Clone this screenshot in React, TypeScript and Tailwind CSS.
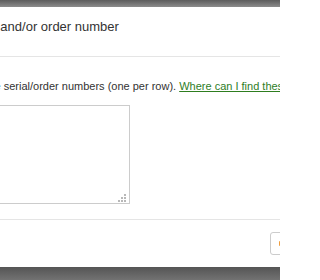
import React from "react";

export default function App() {
  return (
    <div className="w-[280px] h-[280px] overflow-hidden flex flex-col bg-[#666] font-['Liberation_Sans',Arial,sans-serif] text-[#333]">
      <div className="h-[7px] shrink-0 bg-gradient-to-b from-[#5c5c5c] to-[#8c8c8c]" />
      <div className="ml-[-84px] w-[449px] h-[260px] shrink-0 bg-white flex flex-col">
        <div className="px-[15px] pt-[11px] pb-[20px] border-b border-[#e5e5e5]">
          <h4 className="text-[13px] leading-[18px] whitespace-nowrap font-normal">
            Enter serial and/or order number
          </h4>
        </div>
        <div className="pl-[40px] pt-[22px] pb-[15px]">
          <p className="text-[11px] leading-[15px] whitespace-nowrap">
            Enter the serial/order numbers (one per row).{" "}
            <a href="#" className="text-[#2e7d1f] underline decoration-[#2e7d1f]">
              Where can I find these numbers?
            </a>
          </p>
          <div className="relative mt-[11px] w-[174px] h-[99px]">
            <textarea className="block w-full h-full border border-[#cccccc] resize-none outline-none bg-white" />
            <svg
              className="absolute right-[4px] bottom-[2px]"
              width="8"
              height="8"
              viewBox="0 0 8 8"
            >
              <rect x="6" y="0" width="2" height="2" fill="#b8b8b8" />
              <rect x="3" y="3" width="2" height="2" fill="#b8b8b8" />
              <rect x="6" y="3" width="2" height="2" fill="#b8b8b8" />
              <rect x="0" y="6" width="2" height="2" fill="#b8b8b8" />
              <rect x="3" y="6" width="2" height="2" fill="#b8b8b8" />
              <rect x="6" y="6" width="2" height="2" fill="#b8b8b8" />
            </svg>
          </div>
        </div>
        <div className="border-t border-[#e5e5e5] pt-[12px] pr-[15px] flex justify-end">
          <button className="w-[80px] h-[23px] border border-[#cccccc] rounded-[3px] bg-white flex items-center pl-[8px] gap-[4px] text-[11px]">
            <span className="w-[6px] h-[5px] bg-gradient-to-r from-[#f0a040] to-[#e07a20] rounded-[1px]" />
            <span>Continue</span>
          </button>
        </div>
      </div>
      <div className="flex-1 bg-gradient-to-b from-[#555555] to-[#727272]" />
    </div>
  );
}
